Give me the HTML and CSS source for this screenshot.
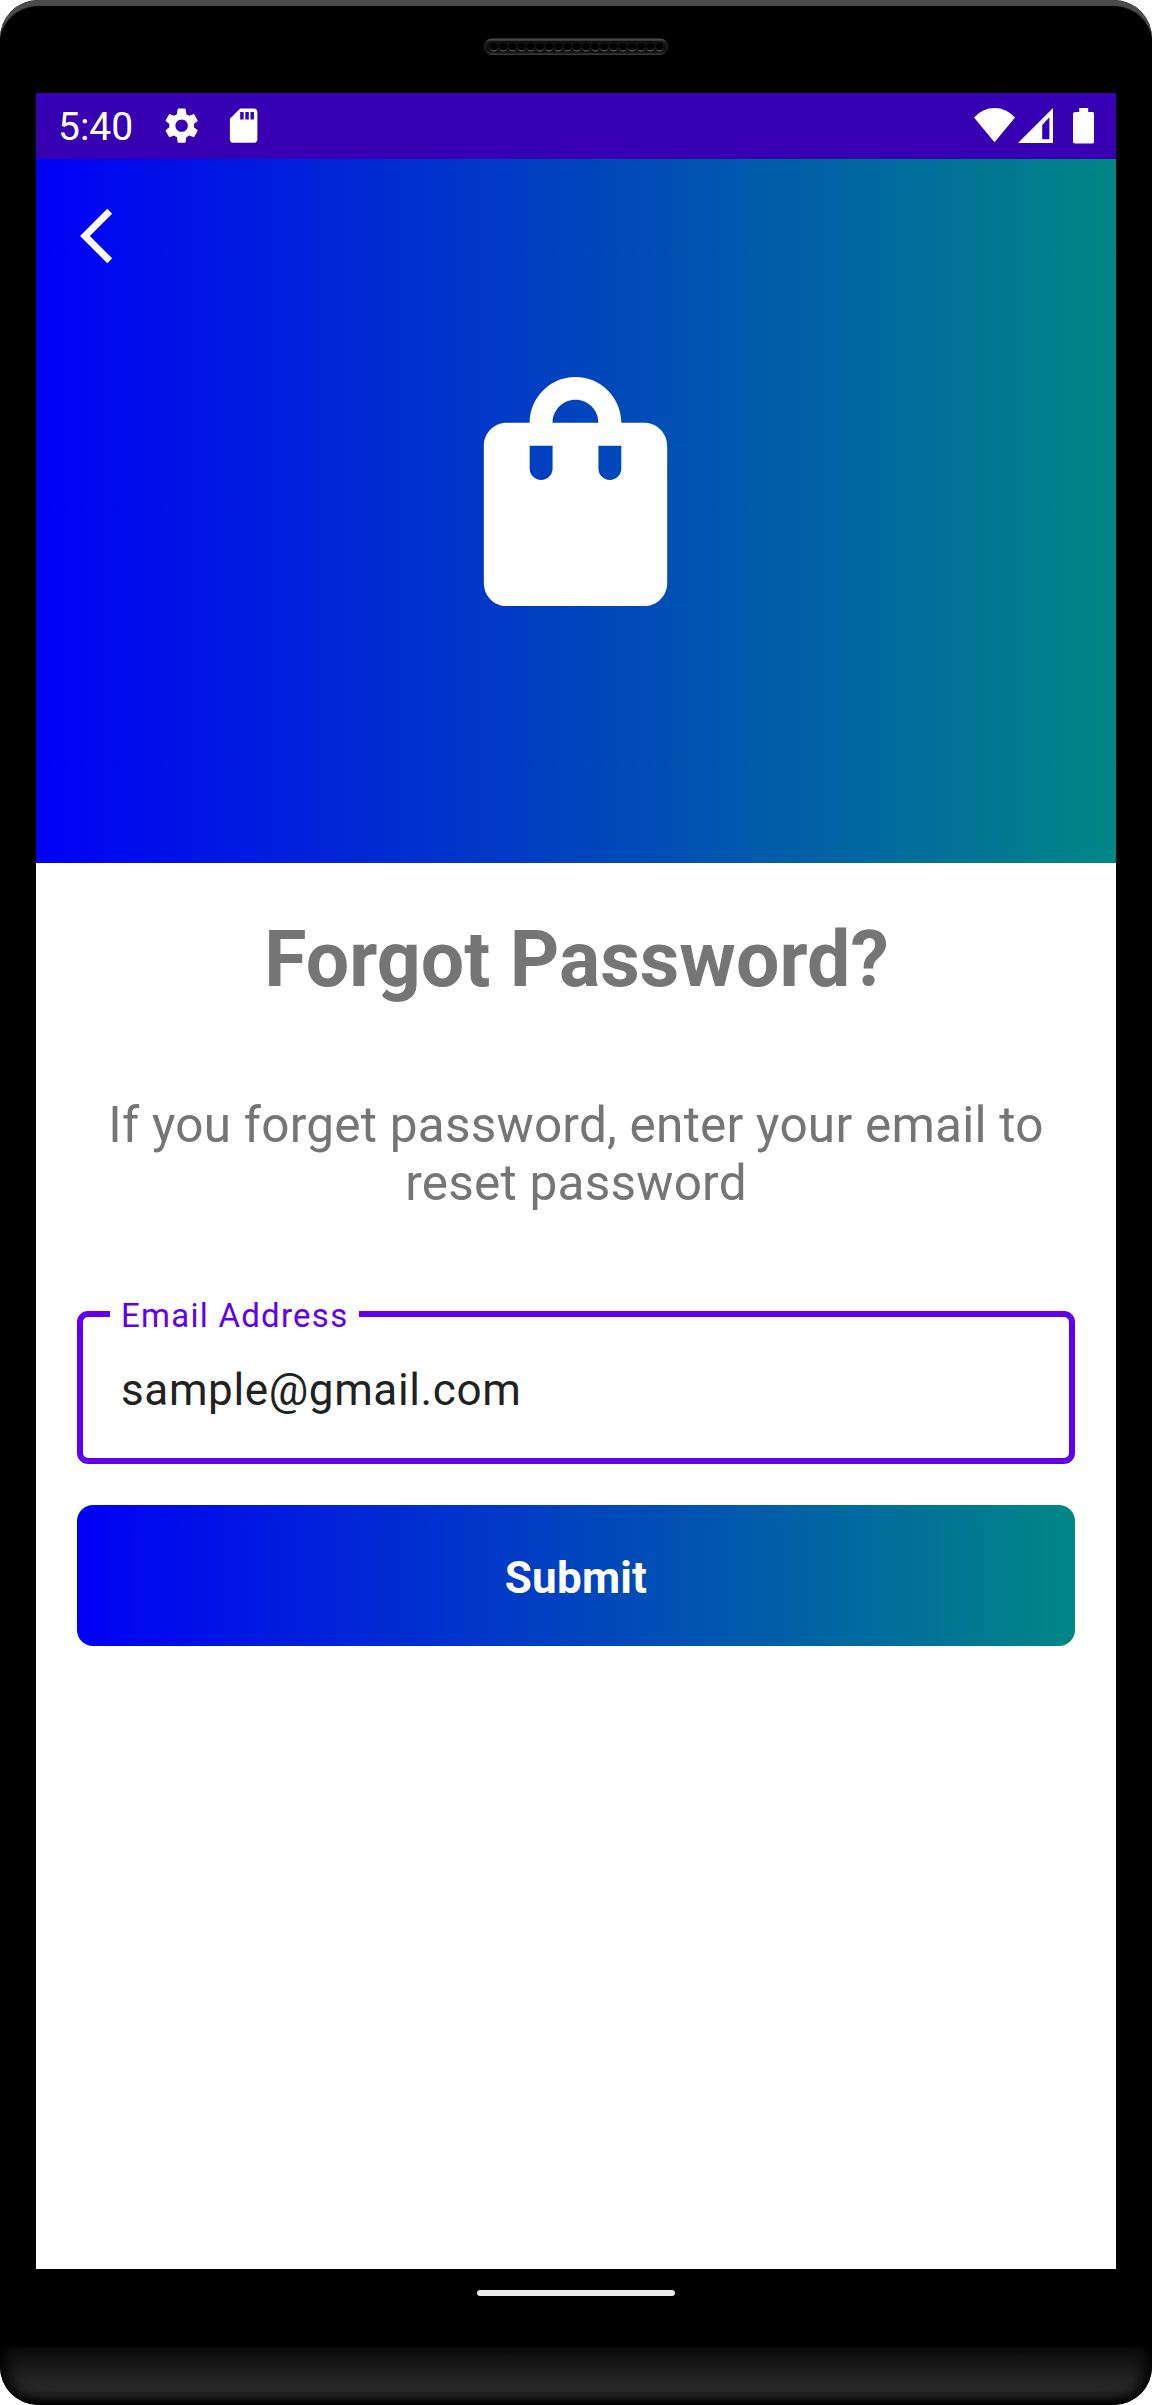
FILE: index.html
```html
<!DOCTYPE html>
<html lang="en">
<head>
<meta charset="utf-8">
<title>Forgot Password</title>
<link rel="stylesheet" href="styles.css">
</head>
<body>
<div class="phone">
  <div class="phone-top">
    <svg class="speaker" viewBox="0 0 186 18">
      <defs>
        <linearGradient id="rim" x1="0" y1="0" x2="0" y2="1"><stop offset="0" stop-color="#555"/><stop offset=".25" stop-color="#1c1c1c"/><stop offset=".8" stop-color="#161616"/><stop offset="1" stop-color="#3c3c3c"/></linearGradient>
        <linearGradient id="hole" x1="0" y1="0" x2="0" y2="1"><stop offset=".45" stop-color="#000"/><stop offset="1" stop-color="#666"/></linearGradient>
        <pattern id="holes" x="6.4" y="0" width="9.2" height="18" patternUnits="userSpaceOnUse"><circle cx="4.6" cy="9.3" r="4.1" fill="url(#hole)"/><circle cx="4.6" cy="8.9" r="3.3"/></pattern>
      </defs>
      <rect x=".5" y=".5" width="185" height="16.5" rx="8.2" fill="url(#rim)"/>
      <rect x="3" y="3" width="180" height="12" rx="6" fill="#111"/>
      <rect x="6.4" y="0" width="174.8" height="18" fill="url(#holes)"/>
    </svg>
  </div>

  <main class="screen">
    <div class="status-bar">
      <span class="clock">5:40</span>
      <svg class="status-icon gear" viewBox="0 0 24 24"><path d="M19.14 12.94c.04-.3.06-.61.06-.94 0-.32-.02-.64-.07-.94l2.03-1.58c.18-.14.23-.41.12-.61l-1.92-3.32c-.12-.22-.37-.29-.59-.22l-2.39.96c-.5-.38-1.03-.7-1.62-.94L14.4 2.81c-.04-.24-.24-.81-.48-.81h-3.84c-.24 0-.43.57-.47.81l-.36 2.54c-.59.24-1.13.57-1.62.94l-2.39-.96c-.22-.08-.47 0-.59.22L2.74 8.87c-.12.21-.08.47.12.61l2.03 1.58c-.05.3-.09.63-.09.94s.02.64.07.94l-2.03 1.58c-.18.14-.23.41-.12.61l1.92 3.32c.12.22.37.29.59.22l2.39-.96c.5.38 1.03.7 1.62.94l.36 2.54c.05.24.24.81.48.81h3.84c.24 0 .44-.57.47-.81l.36-2.54c.59-.24 1.13-.56 1.62-.94l2.39.96c.22.08.47 0 .59-.22l1.92-3.32c.12-.22.07-.47-.12-.61l-2.01-1.58zM12 15.6c-1.98 0-3.6-1.62-3.6-3.6s1.62-3.6 3.6-3.6 3.6 1.62 3.6 3.6-1.62 3.6-3.6 3.6z"/></svg>
      <svg class="status-icon card" viewBox="0 0 24 24"><path d="M18 2h-8L4.02 8 4 20c0 1.1.9 2 2 2h12c1.1 0 2-.9 2-2V4c0-1.1-.9-2-2-2zm-6 6.500h-2V4h2v4.500zm3 0h-2V4h2v4.500zm3 0h-2V4h2v4.500z"/></svg>
      <svg class="system-icons" viewBox="0 0 120 36">
        <path d="M0 9.5Q8.500 0 20.500 0T41 9.500L20.500 34.300z"/>
        <path fill-rule="evenodd" d="M44 35L79 0v35zM68.200 17v14.200h7.200V9.200z"/>
        <path d="M105.200 0h9v4h4q2 0 2 2v27.500q0 2-2 2H101q-2 0-2-2V6q0-2 2-2h4.200z"/>
      </svg>
    </div>

    <header class="hero">
      <svg class="back" viewBox="0 0 24 24"><path d="M17.51 3.87L15.73 2.1 5.84 12l9.9 9.900 1.77-1.770L9.380 12l8.130-8.130z"/></svg>
      <svg class="bag" viewBox="0 0 24 24"><path d="M18 6h-2c0-2.210-1.790-4-4-4S8 3.790 8 6H6c-1.100 0-2 .9-2 2v12c0 1.100.9 2 2 2h12c1.100 0 2-.9 2-2V8c0-1.100-.9-2-2-2zm-8 4c0 .55-.45 1-1 1s-1-.45-1-1V8h2v2zm2-6c1.100 0 2 .9 2 2h-4c0-1.100.9-2 2-2zm4 6c0 .55-.45 1-1 1s-1-.45-1-1V8h2v2z"/></svg>
    </header>

    <section class="content">
      <h1 class="title">Forgot Password?</h1>
      <p class="hint">If you forget password, enter your email to reset password</p>
      <div class="field">
        <span class="field-label">Email Address</span>
        <span class="field-value">sample@gmail.com</span>
      </div>
      <button class="submit" type="button">Submit</button>
    </section>
  </main>

  <div class="nav-bar"><div class="nav-pill"></div></div>
  <div class="phone-chin"></div>
</div>
</body>
</html>
```
FILE: styles.css
```css
* {
  box-sizing: border-box;
}

body {
  margin: 0;
  background: #fff;
  font-family: Roboto, sans-serif;
}

.phone {
  display: flex;
  flex-direction: column;
  width: 1152px;
  height: 2405px;
  overflow: hidden;
  background: #000;
  border-radius: 38px;
}

.phone-top {
  display: flex;
  justify-content: center;
  height: 93px;
  padding-top: 38px;
  border-radius: 38px 38px 0 0;
  box-shadow: inset 0 7px 1px -1px #4c4c4c;
}

.speaker {
  width: 186px;
  height: 18px;
}

.screen {
  width: 1080px;
  height: 2176px;
  margin: 0 auto;
  background: #fff;
}

.status-bar {
  display: flex;
  align-items: center;
  height: 66px;
  padding: 0 22px;
  background: #3700b3;
  color: #fff;
  fill: #fff;
}

.clock {
  width: 76px;
  padding-top: 3px;
  font-size: 39px;
  line-height: 63px;
}

.status-icon {
  width: 41.25px;
  height: 41.25px;
}

.gear {
  margin-left: 27px;
}

.card {
  margin-left: 20.5px;
}

.system-icons {
  width: 120px;
  height: 36px;
  margin-left: auto;
}

.hero {
  display: flex;
  flex-direction: column;
  height: 704px;
  padding: 44px 28px;
  background: linear-gradient(90deg, #0000f6, #018786);
  fill: #fff;
}

.back {
  width: 66px;
  height: 66px;
}

.bag {
  align-self: center;
  width: 275px;
  height: 275px;
  margin-top: 85px;
  margin-right: 2px;
}

.content {
  display: flex;
  flex-direction: column;
  padding: 52px 41px 0;
}

.title {
  margin: 0;
  padding-left: 1px;
  color: #757575;
  font-size: 77px;
  font-weight: 700;
  line-height: 90px;
  letter-spacing: .05px;
  text-align: center;
}

.hint {
  margin: 91px 0 0;
  color: #757575;
  font-size: 49.5px;
  line-height: 58px;
  letter-spacing: .24px;
  text-align: center;
}

.field {
  position: relative;
  height: 153px;
  margin-top: 99px;
  padding: 47px 38px 0;
  border: 6px solid #6200ee;
  border-radius: 11px;
}

.field-label {
  position: absolute;
  top: -21px;
  left: 27px;
  padding: 0 11px;
  background: #fff;
  color: #6200ee;
  font-size: 33px;
  line-height: 39px;
  letter-spacing: 1.26px;
}

.field-value {
  display: block;
  color: #212121;
  font-size: 44px;
  line-height: 52px;
  letter-spacing: .62px;
}

.submit {
  height: 141px;
  margin-top: 41px;
  padding: 5px 0 0;
  border: 0;
  border-radius: 16px;
  background: linear-gradient(90deg, #0000f6, #018786);
  color: #fff;
  font: 700 44px/52px Roboto, sans-serif;
  letter-spacing: .2px;
}

.nav-bar {
  height: 78px;
  padding-top: 21px;
}

.nav-pill {
  width: 198px;
  height: 6px;
  margin: 0 auto;
  border-radius: 3px;
  background: #ebebeb;
}

.phone-chin {
  height: 58px;
  border-radius: 0 0 38px 38px;
  background: linear-gradient(#0b0b0b, #161616 30%, #252525 60%, #262626 75%, #191919 88%, #000);
  box-shadow: inset 12px -3px 14px -6px #000, inset -12px -3px 14px -6px #000;
}
```
